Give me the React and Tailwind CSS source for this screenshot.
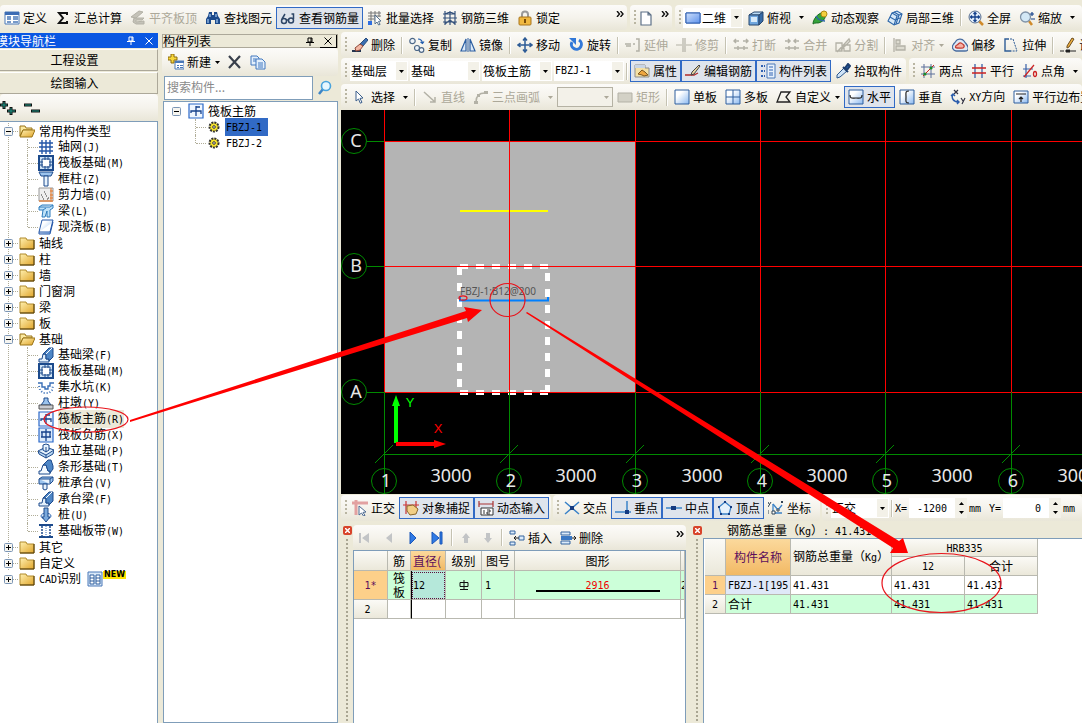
import React from "react";
import { clsx } from "clsx";

const BLUE = "#3a6fb7";
const NAVY = "#1c4a8c";
const GRAY = "#b3b1a6";

const ICONS = {
  define: (
    <>
      <path d="M1 2h14v12H1z" fill="#fff" stroke="#4a78b8" />
      <path d="M1 2h14v3H1z" fill="#3c6cb4" />
      <path d="M3 7h4M3 9h4M3 12h4M9 7h5M9 9h5M9 12h5" stroke="#4a78b8" strokeWidth="1.4" />
    </>
  ),
  sigma: <path d="M12 5V3H4l4 5-4 5h8v-2" fill="none" stroke="#111" strokeWidth="2" />,
  slabTop: (
    <g fill="#c4c2b8" stroke={GRAY}>
      <path d="M1 7l8-6 4 1-7 6zM4 8h10l-2 2H6v2l8-1v3H6l-3-2z" />
    </g>
  ),
  binoculars: (
    <>
      <path d="M4 2h3v3h2V2h3l1 4 2 3v5h-5v-4H6v4H1V9l2-3z" fill={NAVY} />
      <path d="M3 9v4M12 9v4M5 4v3M11 4v3" stroke="#a9cdf4" strokeWidth="1.2" />
    </>
  ),
  glasses: (
    <g fill="none" stroke="#2d4566" strokeWidth="1.5">
      <circle cx="4" cy="11" r="2.5" />
      <circle cx="11" cy="10.500" r="2.500" />
      <path d="M6.500 10h2M2 9l3-5M13.500 9V4h-2" />
    </g>
  ),
  batch: (
    <>
      <path d="M1 3h13M1 6h13M1 9h6M4 1v10M8 1v10M12 1v6" stroke="#777" />
      <path d="M1 11h4v4H1z" fill="#2f6ee0" />
      <path d="M8 5l6 6-2.500.4 1.600 3-1.500.6L10 12l-2 2z" fill="#fff" stroke="#54708e" />
    </>
  ),
  rebar3d: (
    <path d="M1 4h12M1 8h14M1 12h14M3 1v14M8 1v14M13 1v14M3 4l5-2 5 2M3 14l5-4 5 4" fill="none" stroke="#35527c" strokeWidth="1.200" />
  ),
  lock: (
    <>
      <path d="M5 8V4.500a3 3 0 0 1 6 0V8" fill="none" stroke="#9a9a9a" strokeWidth="2" />
      <rect x="2" y="7" width="12" height="8" rx="1" fill="#f0b840" stroke="#a8741c" />
      <path d="M8 9v4" stroke="#7a4c08" strokeWidth="2" />
    </>
  ),
  doc: <path d="M3 2h7l3 3v10H3zM10 2v3h3" fill="#fff" stroke="#5d7088" strokeWidth="1.200" />,
  cube: (
    <>
      <path d="M1 5l5-3h9l-4 3z" fill="#bcdcf5" stroke="#26476e" />
      <path d="M1 5h10v10H1z" fill="#6ea6de" stroke="#26476e" />
      <path d="M11 5l4-3v9l-4 4z" fill="#376ba8" stroke="#26476e" />
      <path d="M3 7h6v5H3z" fill="#d7eaf9" />
    </>
  ),
  orbit: (
    <>
      <path d="M1 14c0-5 5-11 11-12 3 3 1 8-3 10-3 2-6 0-8 2z" fill="#35a33a" stroke="#1b6a25" />
      <circle cx="12" cy="4" r="3" fill="#f3cf3e" stroke="#b08a12" />
      <path d="M4 6c2 4 5 5 9 5" fill="none" stroke="#2b65a8" strokeWidth="1.500" />
    </>
  ),
  part3d: (
    <g fill="#d7e9f8" stroke="#2b65a8" strokeWidth="1.100">
      <path d="M5 3l5-2 5 3-3 9-5 2-6-4z" />
      <path d="M5 3l5 3 5-2M10 6L7 15M3 7l5 3 5-2M7 2l5 3-3 9" fill="none" />
    </g>
  ),
  fullscreen: (
    <>
      <path d="M11 11l4 4" stroke="#d08a2a" strokeWidth="2.500" />
      <circle cx="7" cy="7" r="6" fill="#e4effb" stroke="#5c7292" />
      <path d="M7 2.500v9M2.500 7h9M5.500 4L7 2.500 8.500 4M5.500 10L7 11.500 8.500 10M4 5.500L2.500 7 4 8.500M10 5.500L11.500 7 10 8.500" fill="none" stroke="#14418c" strokeWidth="1.300" />
    </>
  ),
  zoom: (
    <>
      <path d="M10 11l3 4" stroke="#d08a2a" strokeWidth="2.500" />
      <circle cx="6.500" cy="7" r="5" fill="#d3e8f6" stroke="#8093a8" strokeWidth="1.300" />
      <path d="M13 2v4M11 4h4M12 9h4" stroke="#14418c" strokeWidth="1.200" />
    </>
  ),
  erase: (
    <>
      <path d="M0 14h9" stroke="#24344e" strokeWidth="2" />
      <path d="M14 1l2 2-5 6-3-2z" fill="#3b6fb2" stroke="#2b4d7e" />
      <path d="M8 7l3 2-3 4-4 1-1-3z" fill="#f3b7a4" stroke="#8e4738" />
    </>
  ),
  copy: (
    <g fill="#eef4fa" stroke="#4d6888" strokeWidth="1.200">
      <circle cx="3.500" cy="4" r="2.700" />
      <circle cx="8" cy="11" r="2.500" />
      <circle cx="12.500" cy="13" r="2.300" />
      <path d="M9 2c3 0 4 1 4.500 4M11.500 5l2 1.500L15 4.500" fill="none" stroke="#205cae" />
    </g>
  ),
  mirror: (
    <>
      <path d="M6 2v12H1zM10 2v12h5z" fill="#dbe9f8" stroke="#2d5fa2" strokeWidth="1.200" />
      <path d="M8 1v14" stroke="#2d5fa2" />
    </>
  ),
  move: (
    <path d="M8 1v14M1 8h14M6 3.500L8 1l2 2.500M6 12.500L8 15l2-2.500M3.500 6L1 8l2.500 2M12.500 6L15 8l-2.500 2" fill="none" stroke="#2e5c96" strokeWidth="1.500" />
  ),
  rotate: (
    <>
      <path d="M11 3a5 5 0 1 1-7 2" fill="none" stroke="#3278d8" strokeWidth="3" />
      <path d="M1 1h7v7z" fill="#3278d8" />
    </>
  ),
  extend: <path d="M0 7h6M1 9h5M8 7h2M11 2h3v12h-3" fill="none" stroke={GRAY} strokeWidth="1.500" />,
  trim: <path d="M0 8h6M10 8h6M7 1v14M9 1v14" fill="none" stroke={GRAY} strokeWidth="1.200" />,
  breakLine: <path d="M1 4h5M10 4h5M1 11h14M3 2L1 4l2 2M13 2l2 2-2 2M5 9v4M11 9v4" fill="none" stroke={GRAY} strokeWidth="1.500" />,
  merge: <path d="M1 4h5M10 4h5M1 11h14M4 2l2 2-2 2M12 2l-2 2 2 2M5 9v4M11 9v4" fill="none" stroke={GRAY} strokeWidth="1.500" />,
  split: <path d="M1 6h6v8H1zM9 8h6v6H9zM2 15L14 2l1 2-9 9" fill="none" stroke={GRAY} strokeWidth="1.300" />,
  align: <path d="M2 1v14M4 3h4v4H4zM4 9h9v4H4z" fill="#dddbd0" stroke={GRAY} strokeWidth="1.300" />,
  offset: (
    <g fill="none" strokeWidth="1.300">
      <path d="M4 14a4 4 0 0 1-3-6c1-2 2-2 3-4s6-3 8 0 3 3 4 6-1 4-3 4z" fill="#dfe9f5" stroke="#4a6da0" />
      <path d="M5 11c-2 0-2-2 0-3S7 5 9 6s4 2 3 4-3 1-7 1z" fill="#f6b0a5" stroke="#c33b30" />
    </g>
  ),
  stretch: (
    <>
      <path d="M6 2H2v12h6" fill="none" stroke="#2e5c96" strokeWidth="1.400" />
      <path d="M7 2l3 0 4 12H8" fill="none" stroke="#2e5c96" strokeDasharray="2 1" />
    </>
  ),
  setPoint: (
    <>
      <path d="M0 14h4M11 14h5M6 13h4v2H6z" stroke="#222" fill="#222" />
      <path d="M14 2L9 10l-2 1 0-2 5-8z" fill="#f0b03c" stroke="#6b4c20" />
    </>
  ),
  props: (
    <>
      <path d="M1 2h10v3h4v9H1z" fill="#f4e0a4" stroke="#8d8d8d" />
      <path d="M1 2h10v3H1z" fill="#c8d4e4" />
      <path d="M4 11l4-4 3 2 3 3-4 1-2-1z" fill="#efa740" stroke="#7c5520" />
    </>
  ),
  editRebar: (
    <>
      <path d="M0 12h9l4-2" fill="none" stroke="#b02a2a" strokeWidth="1.300" />
      <path d="M14 2l1 1-6 8-3 1 1-3z" fill="#e9d5a3" stroke="#444" />
    </>
  ),
  partList: (
    <>
      <path d="M1 3h4M1 8h4M1 13h4" stroke="#2f62b4" strokeWidth="2" strokeDasharray="2 1 1" />
      <path d="M7 1h8v14H7z" fill="#e8f1fb" stroke="#4a78b8" />
      <path d="M9 4h4M9 7h4M9 10h4M9 12h4" stroke="#2f62b4" />
    </>
  ),
  picker: (
    <>
      <path d="M9 5l3 3-7 6-3 1 0-3z" fill="#cfe3f7" stroke="#2b578c" />
      <path d="M8 4l5 5M10 5l3-4 2 2-3 4z" fill="#255da8" stroke="#1d3e70" strokeWidth="2" />
    </>
  ),
  twoPoint: (
    <>
      <path d="M4 1v14M11 1v14M1 4h14M1 11h14" stroke="#5b6f9a" />
      <path d="M3 13L14 2" stroke="#c22" />
      <circle cx="5" cy="11" r="1.600" fill="#1a8a2a" />
      <circle cx="11" cy="5" r="1.600" fill="#1a8a2a" />
    </>
  ),
  parallel: (
    <>
      <path d="M4 1v14M11 1v14" stroke="#3860a8" strokeWidth="1.300" />
      <path d="M1 5h14M1 10h14" stroke="#c22" strokeWidth="1.300" />
    </>
  ),
  pointAngle: (
    <>
      <path d="M4 1v14M1 6h10M1 13h8" stroke="#3860a8" strokeWidth="1.200" />
      <path d="M2 14L12 2" stroke="#c22" strokeWidth="1.200" />
      <ellipse cx="13" cy="11" rx="1.500" ry="2.500" fill="none" stroke="#c22" strokeWidth="1.300" />
    </>
  ),
  cursor: <path d="M4 2l7 7-3 .4 2 4-1.700.8L6.500 10 4 12z" fill="#fff" stroke="#3c5f8c" />,
  line: <path d="M2 3l11 10M13 8v5H8" fill="none" stroke={GRAY} strokeWidth="1.500" />,
  arc: (
    <>
      <path d="M3 13C3 7 6 4 12 4" fill="none" stroke={GRAY} strokeWidth="1.500" />
      <path d="M1 12h4v3H1zM11 2h4v3h-4zM4 5h3v3H4z" fill={GRAY} />
    </>
  ),
  rect: <path d="M1 4h14v9H1z" fill="#d3d1c6" stroke={GRAY} />,
  blueRect: <path d="M1 3h14v10H1z" fill="url(#glassDeep)" stroke="#2f5eb0" />,
  single: <path d="M1 1h14v14H1z" fill="url(#glass)" stroke="#2f5e9e" />,
  multi: (
    <>
      <path d="M1 1h14v14H1z" fill="url(#glass)" stroke="#2f5e9e" />
      <path d="M8 1v14M1 8h14" stroke="#2f5e9e" />
    </>
  ),
  custom: <path d="M5 3h9l-4 5 4 5H1z" fill="none" stroke="#222" strokeWidth="1.300" />,
  horizontal: (
    <>
      <path d="M1 1h14v14H1z" fill="url(#glass)" stroke="#2f5e9e" />
      <path d="M2 6c0 4 2 3 6 3s6 1 6-3" fill="none" stroke="#222" strokeWidth="1.200" />
    </>
  ),
  vertical: (
    <>
      <path d="M1 1h14v14H1z" fill="url(#glass)" stroke="#2f5e9e" />
      <path d="M10 2C6 2 7 4 7 8s-1 6 3 6" fill="none" stroke="#222" strokeWidth="1.200" />
    </>
  ),
  xy: (
    <>
      <path d="M4 1l4 4M8 1L4 5M11 9l2 3M15 9l-3 6" stroke="#334" strokeWidth="1.200" />
      <path d="M3 5c-2 4 0 8 6 8M1 7l2-2 2 2M7 11l2 2-2 2" fill="none" stroke="#2a5cac" strokeWidth="1.400" />
    </>
  ),
  edge: (
    <>
      <path d="M1 2h14v12H1z" fill="url(#glass)" stroke="#2f5e9e" />
      <path d="M3 5h10M8 13V8M6 10l2-2 2 2" fill="none" stroke="#222" strokeWidth="1.200" />
    </>
  ),
  ortho: (
    <>
      <path d="M0 3h16M4 0v15" stroke="#e2a1a1" strokeWidth="3" />
      <path d="M7 6l7 6-3 .4 2 3-1.500.6-2-3L7 15z" fill="#fff" stroke="#4c6a92" />
    </>
  ),
  snap: (
    <>
      <path d="M3 1v13M13 1v9M0 5h16" stroke="#c33" strokeWidth="1.200" />
      <path d="M4 6l6-1 5 4-2 5-6 1-3-4z" fill="#f2cf86" stroke="#8a662a" />
    </>
  ),
  dynInput: (
    <>
      <path d="M1 1v6M15 1v6M1 4h14" stroke="#a33" strokeWidth="1.200" />
      <path d="M3 8h12v7H3z" fill="#fff" stroke="#333" />
      <path d="M6 10v4M9 10h3v2H9v2h3" fill="none" stroke="#333" />
    </>
  ),
  cross: (
    <>
      <path d="M1 2l14 12M15 2L1 14" stroke="#3b83c8" strokeWidth="1.500" />
      <path d="M6 6h4v4H6z" fill="#153a80" />
    </>
  ),
  foot: (
    <>
      <path d="M0 12h16M12 1v11" stroke="#3b83c8" strokeWidth="1.500" />
      <path d="M10 10h4v4h-4z" fill="#153a80" />
    </>
  ),
  mid: (
    <>
      <path d="M0 8h16" stroke="#3b83c8" strokeWidth="1.500" />
      <path d="M5 6h5v4H5z" fill="#153a80" />
    </>
  ),
  vertex: (
    <>
      <path d="M8 2l6 5-2 7H4L2 7z" fill="#e6f1fb" stroke="#3b83c8" strokeWidth="1.300" />
      <path d="M7 1h2v2H7zM1 6h2v2H1zM13 6h2v2h-2zM3 13h2v2H3zM11 13h2v2h-2z" fill="#153a80" />
    </>
  ),
  coord: (
    <>
      <path d="M5 4v9h9" fill="none" stroke="#3b83c8" strokeWidth="1.300" />
      <path d="M5 4l5 6 4-5" fill="none" stroke="#3b83c8" strokeWidth="1.300" />
      <path d="M0 2l1 2M3 2L0 7M0 10v4M13 1l2 2M15 1l-2 2M4 11h3v3H4zM9 9h2v2H9z" fill="#fff" stroke="#345" />
    </>
  ),
  first: <path d="M2 3h2v10H2zM12 3v10L5 8z" fill="#c2c4c6" />,
  prev: <path d="M11 3v10L5 8z" fill="#c2c4c6" />,
  next: <path d="M5 2v12l6-6z" fill="#2f7ae5" stroke="#1b56b8" />,
  last: <path d="M3 2v12l7-6zM11 2h2v12h-2z" fill="#2f7ae5" stroke="#1b56b8" />,
  up: <path d="M8 3l4 5h-2v5H6V8H4z" fill="#c2c4c6" />,
  down: <path d="M8 13l4-5h-2V3H6v5H4z" fill="#c2c4c6" />,
  insertRow: (
    <>
      <path d="M1 1h5v3H1zM1 12h5v3H1zM10 6h5v4h-5z" fill="#dcebfa" stroke="#35659f" />
      <path d="M10 8H5M7 6L5 8l2 2" fill="none" stroke="#222" />
    </>
  ),
  deleteRow: (
    <>
      <path d="M1 2h9v3H1zM1 11h9v3H1z" fill="#dcebfa" stroke="#35659f" />
      <path d="M1 6h11v4H1z" fill="#3a78c4" />
      <path d="M12 8h4M14 6l2 2-2 2" fill="none" stroke="#222" />
    </>
  ),
  newPart: (
    <>
      <path d="M7 7h9v8H7z" fill="#fff" stroke="#4a78b8" />
      <path d="M7 7h9v2H7zM9 11h2v1H9zM12 11h3v1h-3zM9 13h2v1H9zM12 13h3v1h-3z" fill="#4a78b8" />
      <path d="M3 0h3v3h3v3H6v3H3V6H0V3h3z" fill="#f6d63a" stroke="#8d6c0c" />
    </>
  ),
  remove: <path d="M2 2l11 12M13 2L2 14" stroke="#39404c" strokeWidth="2.200" />,
  copyDoc: (
    <>
      <path d="M1 2h6l2 2v7H1z" fill="#e3effc" stroke="#4279bf" />
      <path d="M6 5h6l3 3v7H6z" fill="#e3effc" stroke="#4279bf" />
      <path d="M8 9h5M8 11h5M8 13h5M3 5h3M3 7h3" stroke="#4279bf" />
    </>
  ),
  search: (
    <>
      <path d="M2 14l4-5" stroke="#3d85c6" strokeWidth="2.500" />
      <circle cx="9" cy="6" r="4.500" fill="#e7f7ff" stroke="#49a3dd" strokeWidth="1.600" />
    </>
  ),
  folder: (
    <>
      <path d="M1 3h6l1 2h7v9H1z" fill="url(#gold)" stroke="#b08a2c" />
      <path d="M1 14h14V5" fill="none" stroke="#4e3808" />
    </>
  ),
  folderOpen: (
    <>
      <path d="M1 3h5l1 2h6v2H4L1 13z" fill="#fbe9a0" stroke="#9a7418" />
      <path d="M4 7h12l-3 7H1z" fill="url(#gold)" stroke="#9a7418" />
    </>
  ),
  grid: <path d="M4 1v14M8 1v14M12 1v14M1 4h14M1 8h14M1 12h14" stroke="#2457a8" strokeWidth="1.400" />,
  raft: (
    <>
      <path d="M1 1h14v14H1z" fill="#cfe3f5" stroke={NAVY} strokeWidth="2" />
      <path d="M4 4h8v8H4zM7 2v3M10 2v3M7 11v3M10 11v3M2 7h3M2 10h3M11 7h3M11 10h3" fill="#fff" stroke={NAVY} />
    </>
  ),
  column: (
    <>
      <path d="M1 1h14l-2 4H3z" fill="#9cc4ee" stroke={NAVY} />
      <path d="M6 5h4v10H6z" fill="#e8f3fd" stroke={NAVY} />
    </>
  ),
  wall: (
    <>
      <path d="M1 1h14v13H1z" fill="#eee" stroke="#999" />
      <path d="M4 10h1M6 5h1M8 9h1M5 12h1M10 11h1M7 7h1M3 8h1M9 12h1" stroke="#333" />
      <path d="M13 1v14M1 14h14M12 4h3M12 8h3M12 11h3" stroke="#e08a4c" strokeWidth="1.300" />
    </>
  ),
  beam: <path d="M1 4l3-2h11v3l-3 2v7H9V8l-2 6H4l1-7H1zM1 4h11l3-2M5 7l3-2" fill="#bfe2f8" stroke="#2e7cbd" />,
  slab: <path d="M4 1h11l-3 12H1zM1 13v2h11l3-12" fill="url(#glass)" stroke="#2457a8" />,
  foundBeam: (
    <>
      <path d="M1 12h3l1-5h3v5h3v3H1z" fill="#e3f0fc" stroke={NAVY} />
      <path d="M5 7l6-6h4v9l-4 4v-2H8V7z" fill="#4e86c6" stroke={NAVY} />
      <path d="M8 7l6-6" stroke="#fff" />
    </>
  ),
  pit: (
    <>
      <path d="M0 4h4v4h3v2h3V7h2V4h4" fill="none" stroke={BLUE} strokeWidth="1.400" />
      <path d="M1 7l1 4 3 3h6l3-3 1-4" fill="none" stroke={BLUE} strokeDasharray="1 2" strokeWidth="2" />
    </>
  ),
  pier: (
    <>
      <path d="M6 3h4v3l3 4H3l3-4z" fill="#9cc4ee" stroke={NAVY} />
      <path d="M1 10h14v4H1z" fill="#c9cbd0" stroke="#555" />
    </>
  ),
  mainBar: (
    <>
      <path d="M1 1h14v14H1z" fill="#eff6fe" stroke="#2a68c8" strokeWidth="1.200" />
      <path d="M8 3v10M3 10V8h10v3M8 4h4" fill="none" stroke="#16418c" strokeWidth="1.300" />
    </>
  ),
  negBar: (
    <>
      <path d="M1 1h14v14H1z" fill="#dbeafb" stroke="#2a68c8" strokeWidth="1.200" />
      <path d="M8 2v12M3 5h10M3 10h10M4 5v5M12 5v5" fill="none" stroke="#16418c" strokeWidth="1.300" />
    </>
  ),
  isolated: (
    <>
      <path d="M0 8l8-4 8 3-1 4-7 4-7-4z" fill="#b8d6f2" stroke={NAVY} />
      <path d="M0 8l8 4 8-5M8 12v3M5 2l3-1 3 1v5L8 9 5 7zM8 4v5" fill="#e8f3fd" stroke={NAVY} />
    </>
  ),
  strip: (
    <>
      <path d="M1 15v-3h2l2-6h3l2 6h2v3z" fill="#f4f9fe" stroke={NAVY} />
      <path d="M5 6l5-5h3l2 6v3l-3 4v-2h-2L8 6z" fill="#4e86c6" stroke={NAVY} />
    </>
  ),
  pileCap: (
    <>
      <path d="M1 4l3-2h11v4l-3 3H1z" fill="#9cc4ee" stroke={NAVY} />
      <path d="M1 4h11v5M12 4l3-2M5 9h4v5l-2 1-2-1z" fill="#e8f3fd" stroke={NAVY} />
    </>
  ),
  pile: (
    <>
      <ellipse cx="8" cy="9" rx="5" ry="3" fill="#dcebfa" stroke={BLUE} />
      <path d="M6 1h4v9h2l-4 5-4-5h2z" fill="#7aa9dc" stroke={NAVY} />
    </>
  ),
  band: (
    <>
      <path d="M1 2h14M1 14h14" stroke={NAVY} strokeWidth="2" />
      <path d="M4 3v11M12 3v11" stroke={NAVY} strokeDasharray="2 1" strokeWidth="1.500" />
      <path d="M8 3v11" stroke={BLUE} strokeDasharray="1 1" />
    </>
  ),
  cad: (
    <>
      <path d="M1 1h14v14H1z" fill="#d9e8f8" stroke="#4a78b8" />
      <path d="M3 4h4v9H3zM9 4h4v9H9zM3 7h4M9 7h4M3 10h4M9 10h4" fill="#fff" stroke="#2f5e9e" />
    </>
  ),
  gear: (
    <>
      <circle cx="8" cy="8" r="4.500" fill="#f4e22c" stroke="#333" strokeDasharray="2 1" strokeWidth="2" />
      <circle cx="8" cy="8" r="3" fill="#f4e22c" />
      <circle cx="8" cy="8" r="1.300" fill="#fff" stroke="#333" />
    </>
  ),
};

function Icon({ name, className }) {
  return (
    <svg viewBox="0 0 16 16" className={clsx("h-4 w-4 shrink-0", className)} aria-hidden="true">
      {ICONS[name]}
    </svg>
  );
}

// CJK text runs at 12px, ASCII runs sit on a 6px monospace grid.
function Label({ text }) {
  return text.split(/([\x21-\x7e][\x20-\x7e]*)/).map((part, i) =>
    i % 2 ? (
      <span key={i} className="font-['DejaVu_Sans_Mono',monospace] text-[10px] whitespace-pre">
        {part}
      </span>
    ) : (
      part
    )
  );
}

function Caret({ className }) {
  return (
    <svg viewBox="0 0 5 3" className={clsx("h-[3px] w-[5px] shrink-0", className)} aria-hidden="true">
      <path d="M0 0h5L2.500 3z" fill="currentColor" />
    </svg>
  );
}

function Chevrons() {
  return (
    <svg viewBox="0 0 8 6" className="h-[6px] w-2" aria-hidden="true">
      <path d="M1 0l2.500 3L1 6M4.500 0L7 3 4.500 6" fill="none" stroke="#111" strokeWidth="1.400" />
    </svg>
  );
}

function Tool({ icon, label, on, disabled, menu, split }) {
  return (
    <button
      type="button"
      disabled={disabled}
      aria-pressed={on}
      className={clsx(
        "flex h-[22px] shrink-0 items-center gap-[3px] border whitespace-nowrap px-[3px]",
        on ? "border-[#316ac5] bg-[#dfe4ec]" : "border-transparent",
        disabled && "text-[#aca899]"
      )}
    >
      <Icon name={icon} />
      <span>
        <Label text={label} />
      </span>
      {menu && <Caret className="ml-px" />}
      {split && <Caret className="ml-[5px]" />}
    </button>
  );
}

function Sep() {
  return <span className="mx-[2px] h-[17px] w-[2px] shrink-0 border-l border-[#c5c2b2] bg-white" />;
}

function Grip() {
  return (
    <span className="ml-1 mr-px h-4 w-[2px] shrink-0 bg-[repeating-linear-gradient(#b9b5a2_0_2px,transparent_2px_4px)]" />
  );
}

function Bar({ className, children }) {
  return (
    <div
      className={clsx(
        "flex items-center overflow-hidden rounded-sm bg-linear-to-b from-[#fcfbf9] via-[#f5f3ec] to-[#e9e6d8]",
        className
      )}
    >
      {children}
    </div>
  );
}

function Combo({ name, value, className, mono, disabled, icon }) {
  return (
    <span className={clsx("relative flex h-5 shrink-0 items-center", className)}>
      {icon && <Icon name={icon} className="absolute left-[2px]" />}
      <select
        aria-label={name}
        disabled={disabled}
        className={clsx(
          "h-full w-full appearance-none leading-[16px] outline-none",
          disabled ? "border border-[#b5b2a4] bg-[#f3f1e9]" : "bg-white",
          icon ? "pl-[19px]" : "pl-px",
          mono && "font-['DejaVu_Sans_Mono',monospace] text-[10px]"
        )}
      >
        <option>{value}</option>
      </select>
      {icon && <Icon name={icon} className="pointer-events-none absolute left-[2px]" />}
      <span
        className={clsx(
          "pointer-events-none absolute right-px flex h-[18px] w-[11px] items-center justify-center",
          disabled ? "text-[#aca899]" : "bg-[#f3f1e8]"
        )}
      >
        <Caret />
      </span>
    </span>
  );
}

function Spin({ name, value, className }) {
  return (
    <label className="flex shrink-0 items-center">
      <span className="w-[14px]">
        <Label text={`${name}=`} />
      </span>
      <input
        defaultValue={value}
        className={clsx("h-5 bg-white pr-2 text-right font-['DejaVu_Sans_Mono',monospace] text-[10px] outline-none", className)}
      />
      <span className="flex h-5 w-[12px] flex-col items-center justify-between bg-[#f3f1e8] py-[4px]">
        <Caret className="rotate-180" />
        <Caret />
      </span>
      <span className="w-[22px] pl-[2px]">
        <Label text="mm" />
      </span>
    </label>
  );
}

function TopBars() {
  return (
    <div className="flex h-[32px] gap-[3px] pt-[5px] pb-[2px]">
      <Bar className="w-[627px] shrink-0">
        <Tool icon="define" label="定义" />
        <Tool icon="sigma" label="汇总计算" />
        <Tool icon="slabTop" label="平齐板顶" disabled />
        <Tool icon="binoculars" label="查找图元" />
        <Tool icon="glasses" label="查看钢筋量" on />
        <Tool icon="batch" label="批量选择" />
        <Tool icon="rebar3d" label="钢筋三维" />
        <Tool icon="lock" label="锁定" />
        <button type="button" aria-label="更多" className="mr-[3px] mb-2 ml-auto">
          <Chevrons />
        </button>
      </Bar>
      <Bar className="w-[42px] shrink-0">
        <Grip />
        <button type="button" aria-label="新建文件" className="px-px">
          <Icon name="doc" />
        </button>
        <button type="button" aria-label="更多" className="mb-2 ml-[6px]">
          <Chevrons />
        </button>
      </Bar>
      <Bar className="flex-1">
        <Grip />
        <Combo name="视图" value="二维" icon="blueRect" className="mx-px w-[60px]" />
        <Tool icon="cube" label="俯视" split />
        <Tool icon="orbit" label="动态观察" />
        <Tool icon="part3d" label="局部三维" />
        <Sep />
        <Tool icon="fullscreen" label="全屏" />
        <Tool icon="zoom" label="缩放" split />
      </Bar>
    </div>
  );
}

function EditBars() {
  return (
    <>
      <Bar className="h-[26px]">
        <Grip />
        <Tool icon="erase" label="删除" />
        <Sep />
        <Tool icon="copy" label="复制" />
        <Tool icon="mirror" label="镜像" />
        <Sep />
        <Tool icon="move" label="移动" />
        <Tool icon="rotate" label="旋转" />
        <Sep />
        <Tool icon="extend" label="延伸" disabled />
        <Tool icon="trim" label="修剪" disabled />
        <Sep />
        <Tool icon="breakLine" label="打断" disabled />
        <Tool icon="merge" label="合并" disabled />
        <Tool icon="split" label="分割" disabled />
        <Sep />
        <Tool icon="align" label="对齐" disabled menu />
        <Tool icon="offset" label="偏移" />
        <Tool icon="stretch" label="拉伸" />
        <Sep />
        <Tool icon="setPoint" label="设置夹点" />
      </Bar>
      <div className="flex h-[26px] gap-[3px]">
        <Bar className="shrink-0">
          <Grip />
          <div className="flex gap-[2px] pl-[2px]">
            <Combo name="楼层" value="基础层" className="w-[58px]" />
            <Combo name="构件分类" value="基础" className="w-[70px]" />
            <Combo name="构件类型" value="筏板主筋" className="w-[70px]" />
            <Combo name="构件" value="FBZJ-1" mono className="w-[70px]" />
          </div>
          <Sep />
          <Tool icon="props" label="属性" on />
          <Tool icon="editRebar" label="编辑钢筋" on />
          <Tool icon="partList" label="构件列表" on />
          <Tool icon="picker" label="拾取构件" />
        </Bar>
        <Bar className="flex-1">
          <Grip />
          <Tool icon="twoPoint" label="两点" />
          <Tool icon="parallel" label="平行" />
          <Tool icon="pointAngle" label="点角" split />
        </Bar>
      </div>
      <Bar className="h-[26px]">
        <Grip />
        <Tool icon="cursor" label="选择" split />
        <Sep />
        <Tool icon="line" label="直线" disabled />
        <Tool icon="arc" label="三点画弧" disabled split />
        <Combo name="弧类型" value="" disabled className="w-[56px]" />
        <Tool icon="rect" label="矩形" disabled />
        <Sep />
        <Tool icon="single" label="单板" />
        <Tool icon="multi" label="多板" />
        <Tool icon="custom" label="自定义" menu />
        <Tool icon="horizontal" label="水平" on />
        <Tool icon="vertical" label="垂直" />
        <Tool icon="xy" label="XY方向" />
        <Tool icon="edge" label="平行边布置" />
      </Bar>
    </>
  );
}

const TREE = [
  {
    label: "常用构件类型",
    open: true,
    items: [
      ["grid", "轴网(J)"],
      ["raft", "筏板基础(M)"],
      ["column", "框柱(Z)"],
      ["wall", "剪力墙(Q)"],
      ["beam", "梁(L)"],
      ["slab", "现浇板(B)"],
    ],
  },
  { label: "轴线" },
  { label: "柱" },
  { label: "墙" },
  { label: "门窗洞" },
  { label: "梁" },
  { label: "板" },
  {
    label: "基础",
    open: true,
    items: [
      ["foundBeam", "基础梁(F)"],
      ["raft", "筏板基础(M)"],
      ["pit", "集水坑(K)"],
      ["pier", "柱墩(Y)"],
      ["mainBar", "筏板主筋(R)"],
      ["negBar", "筏板负筋(X)"],
      ["isolated", "独立基础(P)"],
      ["strip", "条形基础(T)"],
      ["pileCap", "桩承台(V)"],
      ["foundBeam", "承台梁(F)"],
      ["pile", "桩(U)"],
      ["band", "基础板带(W)"],
    ],
  },
  { label: "其它" },
  { label: "自定义" },
  { label: "CAD识别", isNew: true },
];

function Toggle({ open }) {
  return (
    <svg viewBox="0 0 9 9" className="h-[9px] w-[9px] shrink-0" aria-hidden="true">
      <rect x="0.500" y="0.500" width="8" height="8" rx="1" fill="#f6f5f0" stroke="#7b95b5" />
      <path d={open ? "M2 4.500h5" : "M2 4.500h5M4.500 2v5"} stroke="#000" />
    </svg>
  );
}

function NavTree() {
  return (
    <ul className="pt-px">
      {TREE.map((group, g) => (
        <li
          key={group.label}
          className={clsx(
            g < TREE.length - 1 &&
              "bg-[repeating-linear-gradient(#b0ad98_0_1px,transparent_1px_2px)] bg-[length:1px_100%] bg-[position:8px_0] bg-no-repeat"
          )}
        >
          <button type="button" className="flex h-4 w-full items-center pl-1 whitespace-nowrap">
            <Toggle open={group.open} />
            <span className="mr-px w-[5px] border-t border-dotted border-[#b0ad98]" />
            <Icon name={group.open ? "folderOpen" : "folder"} className="mr-1" />
            <span>
              <Label text={group.label} />
            </span>
            {group.isNew && (
              <>
                <Icon name="cad" className="ml-[6px]" />
                <span className="mb-2 bg-[#ffe600] px-px font-['DejaVu_Sans',sans-serif] text-[8px] leading-[8px] font-bold">
                  NEW
                </span>
              </>
            )}
          </button>
          {group.items && (
            <ul>
              {group.items.map(([icon, label], i) => (
                <li key={label} className="flex h-4 items-center pl-[27px]">
                  <span
                    className={clsx(
                      "border-l border-dotted border-[#b0ad98]",
                      i === group.items.length - 1 ? "h-2 self-start" : "h-4"
                    )}
                  />
                  <span className="w-[10px] border-t border-dotted border-[#b0ad98]" />
                  <button type="button" className="flex h-4 items-center gap-1 whitespace-nowrap">
                    <Icon name={icon} />
                    <span className={clsx(icon === "mainBar" && "bg-[#ece9d8]")}>
                      <Label text={label} />
                    </span>
                  </button>
                </li>
              ))}
            </ul>
          )}
        </li>
      ))}
    </ul>
  );
}

function Pin() {
  return (
    <svg viewBox="0 0 8 9" className="h-[9px] w-2" aria-hidden="true">
      <path d="M2 1h4v4H2zM5 1v4M0 5.500h8M4 6v3" fill="none" stroke="currentColor" />
    </svg>
  );
}

function Cross() {
  return (
    <svg viewBox="0 0 8 8" className="h-2 w-2" aria-hidden="true">
      <path d="M0.500 0.500l7 7M7.500 0.500l-7 7" stroke="currentColor" />
    </svg>
  );
}

function NavPanel() {
  return (
    <aside className="flex w-[158px] shrink-0 flex-col pt-px">
      <div className="flex h-[15px] shrink-0 items-center overflow-hidden bg-[#0a57e2] text-white">
        <h2 className="-ml-1 whitespace-nowrap">模块导航栏</h2>
        <button type="button" aria-label="自动隐藏" className="mr-[10px] ml-auto">
          <Pin />
        </button>
        <button type="button" aria-label="关闭" className="mr-[5px]">
          <Cross />
        </button>
      </div>
      {["工程设置", "绘图输入"].map((text) => (
        <button
          key={text}
          type="button"
          className="mt-px h-[22px] shrink-0 border-t border-r border-b border-t-white border-r-[#aca899] border-b-[#aca899] pr-2"
        >
          {text}
        </button>
      ))}
      <Bar className="h-[27px] shrink-0 gap-2">
        <button type="button" aria-label="全部展开">
          <svg viewBox="0 0 16 16" className="h-4 w-4">
            <path d="M4 1v8M0 5h8M11 7v8M7 11h9" stroke="#111" strokeWidth="3" />
            <path d="M4 2v6M1 5h6M11 8v6M8 11h7" stroke="#1f9a8a" />
          </svg>
        </button>
        <button type="button" aria-label="全部折叠">
          <svg viewBox="0 0 16 16" className="h-4 w-4">
            <path d="M0 5h8M7 11h9" stroke="#111" strokeWidth="3" />
            <path d="M1 5h6M8 11h7" stroke="#1f9a8a" />
          </svg>
        </button>
      </Bar>
      <div className="flex-1 overflow-hidden border-t border-r border-[#7f9db9] bg-white">
        <NavTree />
      </div>
    </aside>
  );
}

function PartsPanel() {
  return (
    <aside className="flex w-[176px] shrink-0 flex-col pt-[2px]">
      <div className="flex h-[14px] shrink-0 items-center border border-[#aca899]">
        <h2>构件列表</h2>
        <button type="button" aria-label="自动隐藏" className="mr-[6px] ml-auto">
          <Pin />
        </button>
        <button type="button" aria-label="关闭" className="flex h-[13px] w-[17px] items-center justify-center border-r border-b border-black">
          <Cross />
        </button>
      </div>
      <Bar className="h-[28px] shrink-0 pl-[2px]">
        <Tool icon="newPart" label="新建" menu />
        <button type="button" aria-label="删除" className="px-[3px]">
          <Icon name="remove" />
        </button>
        <button type="button" aria-label="复制" className="px-1">
          <Icon name="copyDoc" />
        </button>
      </Bar>
      <div className="flex h-6 shrink-0 items-center">
        <input
          aria-label="搜索构件"
          placeholder="搜索构件..."
          className="ml-[2px] h-6 w-[149px] border border-[#7f9db9] bg-white pb-1 pl-[2px] outline-none placeholder:text-[#8a8a8a]"
        />
        <button type="button" aria-label="搜索" className="px-1">
          <Icon name="search" />
        </button>
      </div>
      <div className="mt-px ml-px flex-1 border border-[#7f9db9] bg-white pt-[1px]">
        <button type="button" className="flex h-4 items-center pl-2">
          <Toggle open />
          <Icon name="mainBar" className="mr-1 ml-[7px]" />
          筏板主筋
        </button>
        <ul>
          {["FBZJ-1", "FBZJ-2"].map((name, i) => (
            <li key={name} className="flex h-4 items-center pl-[31px]">
              <span className={clsx("border-l border-dotted border-[#b0ad98]", i ? "h-2 self-start" : "h-4")} />
              <span className="w-[10px] border-t border-dotted border-[#b0ad98]" />
              <button type="button" className="flex items-center gap-[3px]">
                <Icon name="gear" />
                <span className={clsx("pl-px leading-[16px]", i === 0 && "w-[43px] bg-[#316ac5] text-left")}>
                  <Label text={name} />
                </span>
              </button>
            </li>
          ))}
        </ul>
      </div>
    </aside>
  );
}

const AXES_X = [43, 168, 294, 419, 544, 670];
const AXES_Y = [["C", 31], ["B", 156], ["A", 282]];

function Drawing() {
  return (
    <div className="min-h-0 flex-1 overflow-hidden bg-black">
      <svg className="block h-full w-full" fontFamily="'Noto Sans', sans-serif" fontSize="18" fill="#e8e8e8" textAnchor="middle">
        <rect x="44" y="32" width="250" height="250" fill="#b4b4b4" />
        <path d="M119 101h88" stroke="#ff0" strokeWidth="2" />
        <g stroke="#fff" strokeWidth="5" strokeDasharray="8 8">
          <path d="M119 156.500h88M119 282.500h88M118.500 157v127M206.500 163v121" />
        </g>
        <text x="157" y="185" fontSize="10" fill="#555">FBZJ-1:B12@200</text>
        <path d="M119 187v3.500h88V187" fill="none" stroke="#0080ff" strokeWidth="2" />

        <g shapeRendering="crispEdges">
          <line x1="43" y1="344" x2="100%" y2="344" stroke="#008a00" />
          {AXES_Y.map(([name, y]) => (
            <g key={name}>
              <line x1="26" y1={y} x2="43" y2={y} stroke="#008a00" />
              <line x1="43" y1={y} x2="100%" y2={y} stroke="#f00" />
            </g>
          ))}
          {AXES_X.map((x) => (
            <g key={x}>
              <line x1={x} y1="0" x2={x} y2="282" stroke="#f00" />
              <line x1={x} y1="282" x2={x} y2="384" stroke="#008a00" />
            </g>
          ))}
        </g>

        {AXES_Y.map(([name, y]) => (
          <g key={name}>
            <circle cx="13" cy={y} r="12.500" fill="none" stroke="#008a00" />
            <text x="15" y={y + 6}>{name}</text>
          </g>
        ))}
        {AXES_X.map((x, i) => (
          <g key={x}>
            <path d={`M${x - 9} 353l18-18`} stroke="#008a00" />
            <circle cx={x} cy="371" r="12.500" fill="none" stroke="#008a00" />
            <text x={x + 2} y="377">{i + 1}</text>
            <text x={x + 67} y="372">3000</text>
          </g>
        ))}

        <path d="M55 333V296" stroke="#0f0" strokeWidth="4" />
        <path d="M51 296l4-11 4 11z" fill="#0f0" />
        <path d="M55 334h38" stroke="#f00" strokeWidth="4" />
        <path d="M93 330l12 4-12 4z" fill="#f00" />
        <g fontFamily="'Liberation Sans', sans-serif" fontSize="13">
          <text x="69" y="297" fill="#0f0">Y</text>
          <text x="97" y="323" fill="#f00">X</text>
        </g>
      </svg>
    </div>
  );
}

function SnapBars() {
  return (
    <div className="mt-px flex h-[26px] shrink-0 gap-[2px]">
      <Bar className="w-[210px] shrink-0">
        <Grip />
        <Tool icon="ortho" label="正交" />
        <Tool icon="snap" label="对象捕捉" on />
        <Tool icon="dynInput" label="动态输入" on />
      </Bar>
      <Bar className="w-[267px] shrink-0">
        <Grip />
        <Tool icon="cross" label="交点" />
        <Tool icon="foot" label="垂点" on />
        <Tool icon="mid" label="中点" on />
        <Tool icon="vertex" label="顶点" on />
        <Tool icon="coord" label="坐标" />
      </Bar>
      <Bar className="flex-1">
        <Grip />
        <Combo name="输入方式" value="正交" className="ml-[2px] w-[58px]" />
        <Sep />
        <Spin name="X" value="-1200" className="w-[46px]" />
        <Spin name="Y" value="0" className="w-[46px]" />
        <Sep />
      </Bar>
    </div>
  );
}

function DockHandle() {
  return (
    <div className="flex w-3 shrink-0 flex-col items-center gap-1 pt-[5px]">
      <button type="button" aria-label="关闭" className="flex h-[9px] w-[9px] shrink-0 items-center justify-center rounded-[2px] bg-[#d8432a] text-white">
        <svg viewBox="0 0 5 5" className="h-[5px] w-[5px]">
          <path d="M0 0l5 5M5 0L0 5" stroke="currentColor" strokeWidth="1.500" />
        </svg>
      </button>
      <span className="w-[2px] flex-1 bg-[repeating-linear-gradient(#a9a592_0_2px,transparent_2px_4px)]" />
    </div>
  );
}

const CELL = "overflow-hidden border-r border-b border-[#b9b9b0] p-0 font-normal whitespace-nowrap";
const HEAD = "bg-linear-to-b from-[#fbfaf6] to-[#ebe8da]";
const GOLD = "bg-linear-to-b from-[#fbd99c] to-[#f2b964] text-[#5c0f5c]";

function RebarPanel() {
  return (
    <section className="flex w-[348px] shrink-0 pr-[3px]">
      <DockHandle />
      <div className="flex min-w-0 flex-1 flex-col pt-1">
        <Bar className="h-[25px] shrink-0">
          {["first", "prev", "next", "last"].map((name) => (
            <button key={name} type="button" aria-label={name} className="px-1">
              <Icon name={name} />
            </button>
          ))}
          <Sep />
          {["up", "down"].map((name) => (
            <button key={name} type="button" aria-label={name} disabled className="px-[3px]">
              <Icon name={name} />
            </button>
          ))}
          <Sep />
          <Tool icon="insertRow" label="插入" />
          <Tool icon="deleteRow" label="删除" />
          <button type="button" aria-label="更多" className="mr-[2px] mb-2 ml-auto">
            <Chevrons />
          </button>
        </Bar>
        <div className="flex-1 overflow-hidden border border-b-0 border-[#7f9db9] bg-white">
          <table className="w-full table-fixed border-separate border-spacing-0 leading-[14px]">
            <colgroup>
              <col className="w-[34px]" />
              <col className="w-[23px]" />
              <col className="w-[35px]" />
              <col className="w-[36px]" />
              <col className="w-[33px]" />
              <col className="w-[166px]" />
              <col />
            </colgroup>
            <thead>
              <tr className="h-5">
                <th className={clsx(CELL, HEAD)} />
                <th className={clsx(CELL, HEAD)}>筋</th>
                <th className={clsx(CELL, GOLD, "pl-[2px] text-left")}>直径(</th>
                <th className={clsx(CELL, HEAD)}>级别</th>
                <th className={clsx(CELL, HEAD)}>图号</th>
                <th className={clsx(CELL, HEAD)}>图形</th>
                <th className={clsx(CELL, HEAD)} />
              </tr>
            </thead>
            <tbody>
              <tr className="h-[29px] bg-[#ccffd9]">
                <th className={clsx(CELL, "bg-[#fdd08a] text-[#5c0f5c]")}>
                  <Label text="1*" />
                </th>
                <td className={clsx(CELL, "text-center")}>
                  <span className="mx-auto block w-3 leading-[14px] whitespace-normal">筏板</span>
                </td>
                <td className={clsx(CELL, "border-l border-l-black bg-[#b5e8da] pl-px outline-1 -outline-offset-2 outline-dotted outline-[#5c0f3c]")}>
                  <Label text="12" />
                </td>
                <td className={clsx(CELL, "text-center")}>
                  <svg viewBox="0 0 10 10" className="mx-auto h-[10px] w-[10px]" role="img" aria-label="HRB335">
                    <path d="M5 0v9M1 9.500h8M1 2.500h8v4H1z" fill="none" stroke="#111" />
                  </svg>
                </td>
                <td className={clsx(CELL, "pl-[3px]")}>
                  <Label text="1" />
                </td>
                <td className={clsx(CELL, "text-center text-[#f00000]")}>
                  <span className="mx-auto block w-[124px] border-b-2 border-black leading-[9px]">
                    <Label text="2916" />
                  </span>
                </td>
                <td className={CELL}>
                  <Label text="2" />
                </td>
              </tr>
              <tr className="h-[19px]">
                <th className={clsx(CELL, HEAD, "pr-[6px]")}>
                  <Label text="2" />
                </th>
                <td className={CELL} />
                <td className={clsx(CELL, "border-l border-l-black")} />
                <td className={CELL} />
                <td className={CELL} />
                <td className={CELL} />
                <td className={CELL} />
              </tr>
            </tbody>
          </table>
        </div>
      </div>
    </section>
  );
}

function WeightPanel() {
  return (
    <section className="flex min-w-0 flex-1 pl-[2px]">
      <DockHandle />
      <div className="flex min-w-0 flex-1 flex-col">
        <p className="h-[17px] shrink-0 pl-6 leading-[18px]">
          <Label text="钢筋总重量（Kg）: 41.431" />
        </p>
        <div className="flex-1 overflow-hidden border-t border-l border-[#7f9db9] bg-white pl-px">
          <table className="w-[333px] table-fixed border-separate border-spacing-0 leading-[14px]">
            <colgroup>
              <col className="w-[21px]" />
              <col className="w-[65px]" />
              <col className="w-[101px]" />
              <col className="w-[73px]" />
              <col className="w-[73px]" />
            </colgroup>
            <thead>
              <tr className="h-[18px]">
                <th rowSpan="2" className={clsx(CELL, HEAD)} />
                <th rowSpan="2" className={clsx(CELL, GOLD)}>构件名称</th>
                <th rowSpan="2" className={clsx(CELL, HEAD, "pl-[2px] text-left")}>
                  <Label text="钢筋总重量（Kg）" />
                </th>
                <th colSpan="2" className={clsx(CELL, HEAD)}>
                  <Label text="HRB335" />
                </th>
              </tr>
              <tr className="h-[19px]">
                <th className={clsx(CELL, HEAD)}>
                  <Label text="12" />
                </th>
                <th className={clsx(CELL, HEAD)}>合计</th>
              </tr>
            </thead>
            <tbody>
              <tr className="h-[19px]">
                <th className={clsx(CELL, "bg-[#fdd08a] text-[#5c0f5c]")}>
                  <Label text="1" />
                </th>
                <td className={clsx(CELL, "bg-[#dfe8f8] pl-[2px]")}>
                  <Label text="FBZJ-1[195" />
                </td>
                {["total", "d12", "sum"].map((key) => (
                  <td key={key} className={clsx(CELL, "pl-[2px]")}>
                    <Label text="41.431" />
                  </td>
                ))}
              </tr>
              <tr className="h-[19px] bg-[#ccffd9]">
                <th className={clsx(CELL, HEAD)}>
                  <Label text="2" />
                </th>
                <td className={clsx(CELL, "pl-[2px]")}>合计</td>
                {["total", "d12", "sum"].map((key) => (
                  <td key={key} className={clsx(CELL, "pl-[2px]")}>
                    <Label text="41.431" />
                  </td>
                ))}
              </tr>
            </tbody>
          </table>
        </div>
      </div>
    </section>
  );
}

function Annotations() {
  return (
    <svg viewBox="0 0 1082 723" className="pointer-events-none absolute top-0 left-0 h-[723px] w-[1082px]" aria-hidden="true">
      <g fill="none" stroke="#e8141c" strokeWidth="1.200">
        <ellipse cx="86" cy="419.500" rx="42" ry="12.500" />
        <ellipse cx="507.500" cy="300" rx="17.500" ry="16.500" />
        <ellipse cx="463" cy="298" rx="4" ry="2.200" />
        <ellipse cx="941.500" cy="583" rx="59.500" ry="29.500" />
      </g>
      <g fill="#f00">
        <path d="M130 420L466 311l-2-4 18 3-14 12-1-4L130 422z" />
        <path d="M527 312L899 541l4-3 5 15h-18l3-5L526 313z" />
      </g>
    </svg>
  );
}

export default function App() {
  return (
    <div className="relative flex h-screen flex-col overflow-hidden bg-[#ece9d8] font-['Noto_Sans_CJK_SC',sans-serif] text-[12px] leading-[16px] text-black">
      <svg className="absolute h-0 w-0" aria-hidden="true">
        <defs>
          <linearGradient id="glass" x1="0" y1="0" x2="1" y2="1">
            <stop offset="0.300" stopColor="#fff" />
            <stop offset="1" stopColor="#8ab8f0" />
          </linearGradient>
          <linearGradient id="glassDeep" x1="0" y1="0" x2="1" y2="1">
            <stop offset="0" stopColor="#cfe0fb" />
            <stop offset="1" stopColor="#5f93ec" />
          </linearGradient>
          <linearGradient id="gold" x1="0" y1="0" x2="1" y2="1">
            <stop offset="0" stopColor="#fff0b0" />
            <stop offset="1" stopColor="#e0a52a" />
          </linearGradient>
        </defs>
      </svg>
      <TopBars />
      <div className="flex min-h-0 flex-1">
        <NavPanel />
        <div className="ml-1 flex">
          <PartsPanel />
        </div>
        <main className="ml-[3px] flex min-w-0 flex-1 flex-col">
          <EditBars />
          <Drawing />
          <SnapBars />
          <div className="flex h-[202px] shrink-0">
            <RebarPanel />
            <WeightPanel />
          </div>
        </main>
      </div>
      <Annotations />
    </div>
  );
}
